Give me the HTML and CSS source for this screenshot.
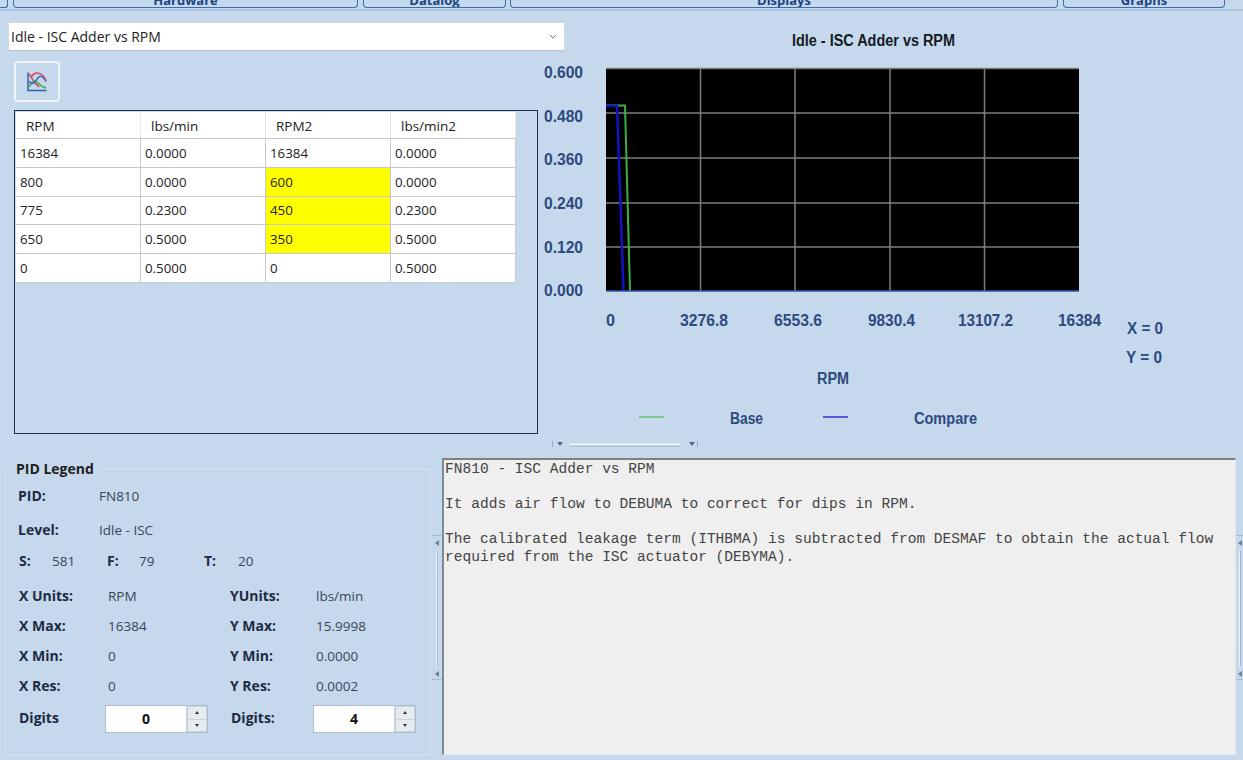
FILE: index.html
```html
<!DOCTYPE html>
<html lang="en">
<head>
<meta charset="utf-8">
<title>Idle - ISC Adder vs RPM</title>
<link rel="stylesheet" href="styles.css">
</head>
<body>
<div class="page">
  <nav class="tabs">
    <div class="tab tab-stub"></div>
    <div class="tab tab-hardware">Hardware</div>
    <div class="tab tab-datalog">Datalog</div>
    <div class="tab tab-displays">Displays</div>
    <div class="tab tab-graphs">Graphs</div>
  </nav>
  <section class="upper">
    <div class="left">
      <div class="combo"><span>Idle - ISC Adder vs RPM</span>
        <svg class="chev" width="8" height="5" viewBox="0 0 8 5"><path d="M1 1l3 3 3-3" fill="none" stroke="#777" stroke-width="1"/></svg>
      </div>
      <button class="icon-btn" type="button" aria-label="Graph">
        <svg width="20" height="20" viewBox="0 0 20 20">
          <path d="M4 5.500C6 1.500 9.500 0.500 12.500 1.500S18 5.500 19 9.500" fill="none" stroke="#d8505f" stroke-width="1.700"/>
          <path d="M2 2L8 11L12 15" fill="none" stroke="#d8505f" stroke-width="1.700"/>
          <path d="M2 15C5 9 8 8 11 11S16 16 19 15.500" fill="none" stroke="#55b060" stroke-width="1.800"/>
          <path d="M2 9C5 13 7 12 10 7S16 5 19 9" fill="none" stroke="#3b6fc0" stroke-width="1.500"/>
          <path d="M1 0.500V18.500H19.500" fill="none" stroke="#2f62b0" stroke-width="1.500"/>
        </svg>
      </button>
      <div class="grid-frame">
        <table class="data">
          <thead>
            <tr><th>RPM</th><th>lbs/min</th><th>RPM2</th><th>lbs/min2</th></tr>
          </thead>
          <tbody>
            <tr><td>16384</td><td>0.0000</td><td>16384</td><td>0.0000</td></tr>
            <tr><td>800</td><td>0.0000</td><td class="hl">600</td><td>0.0000</td></tr>
            <tr><td>775</td><td>0.2300</td><td class="hl">450</td><td>0.2300</td></tr>
            <tr><td>650</td><td>0.5000</td><td class="hl">350</td><td>0.5000</td></tr>
            <tr><td>0</td><td>0.5000</td><td>0</td><td>0.5000</td></tr>
          </tbody>
        </table>
      </div>
    </div>
    <svg class="chart" width="703" height="429" viewBox="540 11 703 429">
      <text class="c-title" x="792" y="46" textLength="163" lengthAdjust="spacingAndGlyphs">Idle - ISC Adder vs RPM</text>
      <g class="c-ticks">
        <text x="544" y="78" textLength="39" lengthAdjust="spacingAndGlyphs">0.600</text>
        <text x="544" y="122" textLength="39" lengthAdjust="spacingAndGlyphs">0.480</text>
        <text x="544" y="165" textLength="39" lengthAdjust="spacingAndGlyphs">0.360</text>
        <text x="544" y="209" textLength="39" lengthAdjust="spacingAndGlyphs">0.240</text>
        <text x="544" y="253" textLength="39" lengthAdjust="spacingAndGlyphs">0.120</text>
        <text x="544" y="296" textLength="39" lengthAdjust="spacingAndGlyphs">0.000</text>
        <text x="606" y="326" textLength="9" lengthAdjust="spacingAndGlyphs">0</text>
        <text x="680" y="326" textLength="48" lengthAdjust="spacingAndGlyphs">3276.8</text>
        <text x="774" y="326" textLength="48" lengthAdjust="spacingAndGlyphs">6553.6</text>
        <text x="868" y="326" textLength="47" lengthAdjust="spacingAndGlyphs">9830.4</text>
        <text x="958" y="326" textLength="55" lengthAdjust="spacingAndGlyphs">13107.2</text>
        <text x="1058" y="326" textLength="43" lengthAdjust="spacingAndGlyphs">16384</text>
        <text x="1127" y="334" textLength="36" lengthAdjust="spacingAndGlyphs">X = 0</text>
        <text x="1126" y="363" textLength="36" lengthAdjust="spacingAndGlyphs">Y = 0</text>
        <text x="817" y="384" textLength="32" lengthAdjust="spacingAndGlyphs">RPM</text>
        <text x="730" y="424" textLength="33" lengthAdjust="spacingAndGlyphs">Base</text>
        <text x="914" y="424" textLength="63" lengthAdjust="spacingAndGlyphs">Compare</text>
      </g>
      <rect x="606" y="68" width="473" height="223" fill="#000"/>
      <path class="c-grid" d="M606 68.500H1079M606 113H1079M606 158H1079M606 203H1079M606 247H1079M700.500 68V291M795 68V291M890 68V291M984.500 68V291"/>
      <path d="M606 105.500H625L630 291" fill="none" stroke="#3cb043" stroke-width="2"/>
      <path d="M606 106H617L623.500 291" fill="none" stroke="#1212c4" stroke-width="2.500"/>
      <path d="M606 291H1079" stroke="#2b5aa8" stroke-width="1.500"/>
      <path d="M639 417H664" stroke="#52c25c" stroke-width="1.300"/>
      <path d="M823 417H848" stroke="#1a1ad0" stroke-width="1.300"/>
    </svg>
  </section>
  <div class="grip">
    <svg width="146" height="8" viewBox="0 0 146 8">
      <path d="M0.500 1V7M145.500 1V7" stroke="#9aa9bb"/>
      <path d="M5 2h6l-3 4zM137 2h6l-3 4z" fill="#566a84"/>
      <path d="M18 4.500H128" stroke="#f4f8fc" stroke-width="2"/>
      <path d="M18 6H128" stroke="#9fb1c6"/>
    </svg>
  </div>
  <section class="lower">
    <fieldset class="pid">
      <legend>PID Legend</legend>
      <div class="pid-rows">
        <div class="row"><b class="w81">PID:</b><span>FN810</span></div>
        <div class="row"><b class="w81">Level:</b><span>Idle - ISC</span></div>
        <div class="row x1"><b class="w33">S:</b><span class="w55">581</span><b class="w32">F:</b><span class="w65">79</span><b class="w34">T:</b><span>20</span></div>
        <div class="row x1"><b class="w89">X Units:</b><span class="w122">RPM</span><b class="w86">YUnits:</b><span>lbs/min</span></div>
        <div class="row x1"><b class="w89">X Max:</b><span class="w122">16384</span><b class="w86">Y Max:</b><span>15.9998</span></div>
        <div class="row x1"><b class="w89">X Min:</b><span class="w122">0</span><b class="w86">Y Min:</b><span>0.0000</span></div>
        <div class="row x1"><b class="w89">X Res:</b><span class="w122">0</span><b class="w86">Y Res:</b><span>0.0002</span></div>
        <div class="row x1 digits">
          <b class="w86">Digits</b>
          <div class="spin spin-first"><span class="spin-val">0</span><span class="spin-btns"><i class="up"></i><i class="down"></i></span></div>
          <b class="w82">Digits:</b>
          <div class="spin"><span class="spin-val">4</span><span class="spin-btns"><i class="up"></i><i class="down"></i></span></div>
        </div>
      </div>
    </fieldset>
    <div class="vsplit"><i class="la"></i><i class="bar"></i><i class="la"></i></div>
    <div class="desc">FN810 - ISC Adder vs RPM

It adds air flow to DEBUMA to correct for dips in RPM.

The calibrated leakage term (ITHBMA) is subtracted from DESMAF to obtain the actual flow required from the ISC actuator (DEBYMA).</div>
    <div class="vsplit"><i class="la"></i><i class="bar"></i><i class="la"></i></div>
  </section>
</div>
</body>
</html>
```
FILE: styles.css
```css
* { box-sizing: border-box; }
html, body { margin: 0; padding: 0; }
body { background: #c6d8eb; font-family: "Open Sans", "Noto Sans", sans-serif; color: #2b2b2b; }
.page { width: 1243px; height: 760px; overflow: hidden; display: flex; flex-direction: column; background: #c6d8eb; }

.tabs { height: 11px; flex: none; display: flex; overflow: hidden; border-bottom: 2px solid #a9c4e2; }
.tab { height: 24px; margin-top: -16px; line-height: 32px; text-align: center; font-size: 13px; font-weight: 700; color: #21437c; border: 1px solid #3f6ca3; border-top: 0; border-radius: 0 0 4px 4px; background: #c4d9ef; overflow: hidden; flex: none; }
.tab-stub { width: 8px; border-left: 0; border-radius: 0 0 3px 0; }
.tab-hardware { width: 345px; margin-left: 5px; }
.tab-datalog { width: 143px; margin-left: 5px; }
.tab-displays { width: 548px; margin-left: 4px; }
.tab-graphs { width: 162px; margin-left: 5px; }

.upper { height: 429px; flex: none; display: flex; }
.left { width: 540px; flex: none; padding-top: 11px; position: relative; z-index: 1; }
.combo { width: 557px; height: 29px; margin-left: 8px; padding: 0 7px 0 2px; background: #fff; border: 1px solid #d5d9de; border-bottom-color: #b9bfc7; display: flex; align-items: center; justify-content: space-between; font-size: 14px; color: #222; }
.chev { flex: none; }
.icon-btn { display: flex; align-items: center; justify-content: center; width: 46px; height: 41px; margin: 10px 0 0 14px; padding: 0; background: #c6d8eb; border: 2px solid #eef4fa; border-radius: 4px; }
.grid-frame { width: 524px; height: 324px; margin: 8px 0 0 14px; padding: 1px; border: 1px solid #1f2d44; }
.data { border-collapse: separate; border-spacing: 0; table-layout: fixed; width: 500px; background: #fff; font-size: 13.300px; color: #222; }
.data th, .data td { padding: 0 0 0 4px; font-weight: 400; text-align: left; border-right: 1px solid #c5c8cc; border-bottom: 1px solid #c5c8cc; height: 28.800px; }
.data th { height: 27px; padding: 1px 0 0 10px; font-size: 13.500px; border-right-color: #e8e8e8; }
.data .hl { background: #ffff00; }

.chart { flex: none; display: block; }
.c-title { font: 700 16px "Liberation Sans", sans-serif; fill: #141a26; }
.c-ticks text { font: 700 16px "Liberation Sans", sans-serif; fill: #2c4a80; }
.c-grid { fill: none; stroke: #7d7d7d; stroke-width: 1.500; }

.grip { height: 8px; flex: none; margin: 0 0 10px 552px; line-height: 0; }

.lower { height: 302px; flex: none; display: flex; align-items: flex-start; }
.pid { width: 426px; height: 296px; margin: 1px 0 0 5px; padding: 0; min-width: 0; border: 1px solid #d3e1f0; }
.pid legend { margin-left: 6px; padding: 0 4px; height: 20px; line-height: 20px; font-size: 14px; font-weight: 700; color: #1e1e1e; }
.pid-rows { display: grid; grid-template-rows: 34px 31px 35px 30px 30px 30px 32px 24px; padding: 5px 0 0 12px; font-size: 13.500px; color: #3a4658; }
.row { display: flex; align-items: flex-start; line-height: 24px; height: 24px; white-space: nowrap; }
.row b { font-weight: 700; color: #1c2b44; font-size: 14px; flex: none; }
.row.x1 { padding-left: 1px; }
.w81 { width: 81px; } .w33 { width: 33px; } .w55 { width: 55px; } .w32 { width: 32px; } .w65 { width: 65px; } .w34 { width: 34px; }
.w89 { width: 89px; } .w122 { width: 122px; } .w86 { width: 86px; } .w82 { width: 82px; }
.digits { align-items: center; overflow: visible; }
.spin { flex: none; width: 103px; height: 28px; margin-top: 2px; display: flex; background: #c9d3de; border: 1px solid #aebccb; }
.spin-first { margin-right: 23px; }
.spin-val { flex: 1; background: #fff; text-align: center; font-weight: 700; font-size: 14px; line-height: 26px; color: #111; }
.spin-btns { width: 21px; display: flex; flex-direction: column; gap: 1px; padding: 1px 1px 1px 2px; }
.spin-btns i { flex: 1; background: #e6ebf0; display: flex; align-items: center; justify-content: center; }
.spin-btns i::before { content: ""; border-left: 2.500px solid transparent; border-right: 2.500px solid transparent; }
.up::before { border-bottom: 3px solid #333; }
.down::before { border-top: 3px solid #333; }

.vsplit { flex: none; width: 11px; height: 145px; margin-top: 77px; padding: 0 3px; display: flex; flex-direction: column; align-items: center; gap: 5px; border-top: 1px solid #a9b9cb; border-bottom: 1px solid #a9b9cb; }
.vsplit .la { flex: none; width: 0; height: 0; margin-top: 4px; border-top: 3.500px solid transparent; border-bottom: 3.500px solid transparent; border-right: 4px solid #6c7f96; }
.vsplit .la:last-child { margin: 0 0 2px; }
.vsplit .bar { flex: 1; width: 2px; background: #eef4fa; border-right: 1px solid #a6b6c9; }
.vsplit:last-child { width: 7px; padding: 0 1px; }
.desc { flex: none; width: 794px; height: 297px; padding: 1px 4px 0 1px; background: #efefef; border-top: 2px solid #808080; border-left: 2px solid #7e8a96; border-right: 1px solid #e4e8ec; border-bottom: 1px solid #e4e8ec; font: 14.560px/17.500px "Liberation Mono", monospace; color: #444; white-space: pre-wrap; }
```
